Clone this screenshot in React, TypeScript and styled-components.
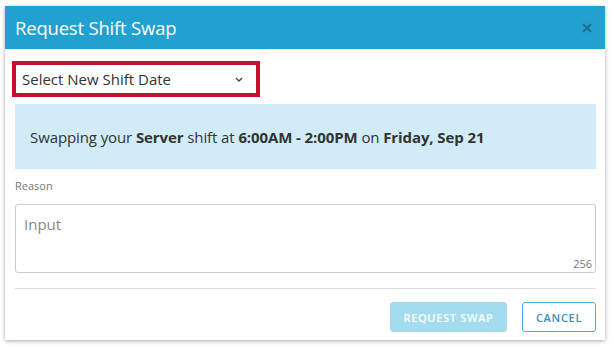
import styled, { createGlobalStyle } from 'styled-components';

const GlobalStyle = createGlobalStyle`
  body {
    margin: 0;
    background: #ffffff;
    font-family: 'Open Sans', 'Liberation Sans', sans-serif;
  }
`;

const Page = styled.div`
  padding: 6px 9px 9px 5px;
`;

const Modal = styled.div`
  width: 600px;
  background: #fff;
  box-shadow: 0 1px 4px rgba(0, 0, 0, 0.35);
`;

const Header = styled.header`
  display: flex;
  align-items: center;
  justify-content: space-between;
  height: 43px;
  padding: 0 10px 0 10px;
  background: #21a1d0;
`;

const Title = styled.h1`
  margin: 0;
  font-size: 18.5px;
  font-weight: 400;
  color: #fff;
  letter-spacing: -0.2px;
`;

const Close = styled.button`
  border: 0;
  background: transparent;
  padding: 0;
  width: 16px;
  height: 16px;
  display: flex;
  align-items: center;
  justify-content: center;
  cursor: pointer;
`;

const Body = styled.div`
  display: flex;
  flex-direction: column;
  padding: 12px 9px 8px 10px;
`;

const SelectBox = styled.div`
  align-self: flex-start;
  margin-left: -3px;
  display: flex;
  align-items: center;
  justify-content: space-between;
  box-sizing: border-box;
  width: 248px;
  height: 36px;
  padding: 0 13px 0 6px;
  border: 4px solid #c8102e;
  font-size: 15px;
  color: #333;
`;

const InfoBox = styled.div`
  margin-top: 7px;
  height: 65px;
  display: flex;
  align-items: center;
  padding: 0 15px;
  background: #d1ecf6;
  font-size: 15px;
  color: #333;
  letter-spacing: -0.1px;

  b {
    font-weight: 700;
  }
`;

const Label = styled.label`
  margin-top: 9px;
  font-size: 11px;
  color: #777;
`;

const TextArea = styled.div`
  position: relative;
  margin-top: 11px;
  box-sizing: border-box;
  height: 69px;
  padding: 9px 8px;
  border: 1px solid #ccc;
  border-radius: 3px;
  font-size: 15px;
  color: #888;
`;

const Counter = styled.span`
  position: absolute;
  right: 3px;
  bottom: 1px;
  font-size: 11px;
  color: #777;
`;

const Divider = styled.hr`
  margin: 15px 0 0;
  border: 0;
  border-top: 1px solid #ddd;
`;

const Footer = styled.div`
  display: flex;
  justify-content: flex-end;
  gap: 15px;
  margin-top: 13px;
`;

const Button = styled.button<{ $variant: 'primary' | 'outline' }>`
  box-sizing: border-box;
  height: 30px;
  padding: 0;
  border-radius: 3px;
  white-space: nowrap;
  font-family: 'Open Sans', 'Liberation Sans', sans-serif;
  font-size: 11px;
  font-weight: 600;
  letter-spacing: 0.7px;
  text-transform: uppercase;
  cursor: pointer;
  border: 1px solid ${({ $variant }) => ($variant === 'primary' ? '#a3dcef' : '#4aaedb')};
  background: ${({ $variant }) => ($variant === 'primary' ? '#a3dcef' : '#fff')};
  color: ${({ $variant }) => ($variant === 'primary' ? '#fff' : '#3a8fbf')};
  width: ${({ $variant }) => ($variant === 'primary' ? '117px' : '74px')};
`;

export default function App() {
  return (
    <>
      <GlobalStyle />
      <Page>
        <Modal>
          <Header>
            <Title>Request Shift Swap</Title>
            <Close aria-label="Close">
              <svg width="10" height="10" viewBox="0 0 10 10">
                <path d="M1 1L9 9M9 1L1 9" stroke="#1d6f91" strokeWidth="2" />
              </svg>
            </Close>
          </Header>
          <Body>
            <SelectBox>
              <span>Select New Shift Date</span>
              <svg width="8" height="5" viewBox="0 0 8 5">
                <path d="M1 1L4 4L7 1" stroke="#444" strokeWidth="1.4" fill="none" />
              </svg>
            </SelectBox>
            <InfoBox>
              <span>
                Swapping your <b>Server</b> shift at <b>6:00AM - 2:00PM</b> on <b>Friday, Sep 21</b>
              </span>
            </InfoBox>
            <Label>Reason</Label>
            <TextArea>
              Input
              <Counter>256</Counter>
            </TextArea>
            <Divider />
            <Footer>
              <Button $variant="primary">Request Swap</Button>
              <Button $variant="outline">Cancel</Button>
            </Footer>
          </Body>
        </Modal>
      </Page>
    </>
  );
}
